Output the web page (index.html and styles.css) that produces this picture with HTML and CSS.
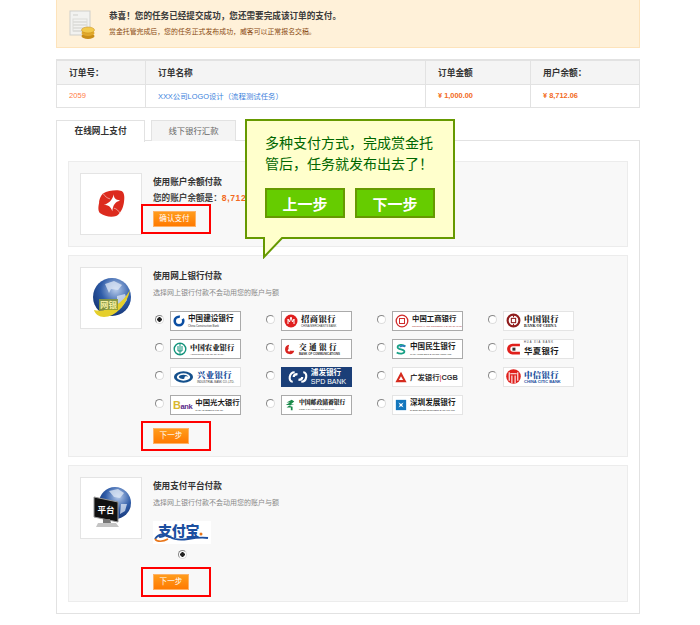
FILE: index.html
```html
<!DOCTYPE html>
<html lang="zh-CN">
<head>
<meta charset="utf-8">
<title>支付</title>
<link rel="stylesheet" href="styles.css">
</head>
<body>
<div class="page">
  <div class="notice">
    <svg class="notice-icon" viewBox="0 0 26 30" width="26" height="30">
      <rect x="1" y="1" width="20" height="24" fill="#f2f2f0" stroke="#cfcfcb"/>
      <path d="M4 5h5M4 12h14M4 15h14M4 18h14M4 21h10" stroke="#cfcfcb" fill="none"/>
      <rect x="4" y="9" width="14" height="12" fill="none" stroke="#dcdcd8"/>
      <ellipse cx="19" cy="26" rx="6.5" ry="3" fill="#c98d18"/>
      <ellipse cx="19" cy="23" rx="6.5" ry="3" fill="#e0a82c"/>
      <ellipse cx="19" cy="20" rx="6.5" ry="3" fill="#f2c94c" stroke="#c98d18" stroke-width=".5"/>
    </svg>
    <div>
      <p class="notice-title">恭喜&#xFF01;您的任务已经提交成功&#xFF0C;您还需要完成该订单的支付。</p>
      <p class="notice-sub">赏金托管完成后&#xFF0C;您的任务正式发布成功&#xFF0C;威客可以正常报名交稿。</p>
    </div>
  </div>

  <table class="order">
    <thead>
      <tr><th class="c1">订单号&#xFF1A;</th><th class="c2">订单名称</th><th class="c3">订单金额</th><th class="c4">用户余额&#xFF1A;</th></tr>
    </thead>
    <tbody>
      <tr>
        <td class="order-no">2059</td>
        <td><a class="order-link">XXX公司LOGO设计&#xFF08;流程测试任务&#xFF09;</a></td>
        <td class="money"><b>¥</b> 1,000.00</td>
        <td class="money"><b>¥</b> 8,712.06</td>
      </tr>
    </tbody>
  </table>

  <div class="tabs">
    <div class="tab active">在线网上支付</div>
    <div class="tab">线下银行汇款</div>
  </div>

  <div class="panel">
    <section class="method method-balance">
      <div class="thumb">
        <svg viewBox="0 0 40 40" width="31" height="31">
          <path d="M9 7C16 3 28 2 33 4c4 2 4 9 3 15-1 7-5 15-10 17-5 2-15 1-20-3-4-3-3-9-2-14 0-5 3-10 5-12z" fill="#dc2b1e"/>
          <path d="M23 8c0 5 2 7 8 8-6 2-9 5-10 14-2-6-5-8-11-8 6-2 11-6 13-14z" fill="#fff"/>
          <path d="M9 7c3 4 5 6 9 7M31 33c-2-4-4-6-8-7" stroke="#f9dcd8" stroke-width=".8" fill="none"/>
        </svg>
      </div>
      <div class="method-body">
        <h3 class="method-title">使用账户余额付款</h3>
        <p class="balance">您的账户余额是&#xFF1A;<b>8,712.06</b></p>
        <button class="pay-btn pay-btn-wide marked">确认支付</button>
      </div>
    </section>

    <section class="method method-bank">
      <div class="thumb">
        <svg viewBox="0 0 44 44" width="44" height="44">
          <defs>
            <radialGradient id="globe" cx=".6" cy=".3" r=".8">
              <stop offset="0" stop-color="#b9cdec"/><stop offset=".5" stop-color="#2f5ca8"/><stop offset="1" stop-color="#0d2a66"/>
            </radialGradient>
          </defs>
          <circle cx="23" cy="21" r="19" fill="url(#globe)"/>
          <path d="M16 8l9-3 8 4-4 5-7-1-2 4zM28 20l8-2 2 6-6 8-4-6z" fill="#dfe8f5" opacity=".75"/>
          <path d="M5 34c12 3 28-5 36-20-3 15-15 27-26 27-5 0-9-3-10-7z" fill="#e5cf2c"/>
          <rect x="10" y="23" width="19" height="11" fill="#8b9a3a" opacity=".9"/>
          <text x="19.500" y="32" class="thumb-label thumb-label-y">网银</text>
        </svg>
      </div>
      <div class="method-body">
        <h3 class="method-title">使用网上银行付款</h3>
        <p class="method-desc">选择网上银行付款不会动用您的账户与额</p>
        <div class="bank-grid">
          <label class="bank-opt"><input class="radio" type="radio" name="bank" checked><span class="bank">
            <svg class="mark" viewBox="0 0 14 14"><circle cx="7" cy="7" r="5" fill="none" stroke="#0b4ea2" stroke-width="3" stroke-dasharray="24 4"/></svg>
            <span class="bank-text"><span class="zh dark">中国建设银行</span><span class="en">China Construction Bank</span></span></span></label>
          <label class="bank-opt"><input class="radio" type="radio" name="bank"><span class="bank">
            <svg class="mark mark-m" viewBox="0 0 14 14"><circle cx="7" cy="7" r="6.500" fill="#e02020"/><path d="M4 10V5l1.500 3L7 3l1.500 5L10 5v5" stroke="#fff" fill="none"/></svg>
            <span class="bank-text"><span class="zh zh-l serif">招商银行</span><span class="en">CHINA MERCHANTS BANK</span></span></span></label>
          <label class="bank-opt"><input class="radio" type="radio" name="bank"><span class="bank">
            <svg class="mark mark-m" viewBox="0 0 14 14"><circle cx="7" cy="7" r="5.800" fill="none" stroke="#d02b2b" stroke-width="1.300"/><rect x="4.500" y="4.500" width="5" height="5" fill="none" stroke="#d02b2b"/></svg>
            <span class="bank-text"><span class="zh zh-t dark">中国工商银行</span><span class="en en-tight en-red">INDUSTRIAL AND COMMERCIAL BANK OF CHINA</span></span></span></label>
          <label class="bank-opt"><input class="radio" type="radio" name="bank"><span class="bank bank-light">
            <svg class="mark mark-l" viewBox="0 0 14 14"><circle cx="7" cy="7" r="5.500" fill="none" stroke="#8f1c1c" stroke-width="2"/><rect x="5" y="5" width="4" height="4" fill="none" stroke="#8f1c1c"/><path d="M7 1v3M7 10v3" stroke="#8f1c1c"/></svg>
            <span class="bank-text"><span class="zh zh-l serif">中国银行</span><span class="en en-black">BANK OF CHINA</span></span></span></label>

          <label class="bank-opt"><input class="radio" type="radio" name="bank"><span class="bank">
            <svg class="mark mark-m" viewBox="0 0 14 14"><circle cx="7" cy="7" r="5.800" fill="none" stroke="#12937b" stroke-width="1.400"/><path d="M7 2v10M5 4v5h4V4" stroke="#12937b" fill="none"/></svg>
            <span class="bank-text"><span class="zh zh-t serif">中国农业银行</span><span class="en en-tight">AGRICULTURAL BANK OF CHINA</span></span></span></label>
          <label class="bank-opt"><input class="radio" type="radio" name="bank"><span class="bank">
            <svg class="mark" viewBox="0 0 14 14"><path d="M6 2a5.500 5.500 0 1 0 6 7H8L5 6z" fill="#d8231f"/><circle cx="6" cy="8.500" r="1.500" fill="#fff"/></svg>
            <span class="bank-text"><span class="zh zh-wide serif">交通银行</span><span class="en en-wide">BANK OF COMMUNICATIONS</span></span></span></label>
          <label class="bank-opt"><input class="radio" type="radio" name="bank"><span class="bank">
            <svg class="mark" viewBox="0 0 14 14"><path d="M12 4C9 1 3 2 3 5s8 2 8 5-6 3-9 1" stroke="#17a085" stroke-width="2" fill="none"/><path d="M12 4C10 3 6 3 6 5" stroke="#2a7cc0" stroke-width="2" fill="none"/></svg>
            <span class="bank-text"><span class="zh dark">中国民生银行</span><span class="en en-tight">CHINA MINSHENG BANKING CORP.,LTD.</span></span></span></label>
          <label class="bank-opt"><input class="radio" type="radio" name="bank"><span class="bank bank-light">
            <svg class="mark mark-l" viewBox="0 0 14 14"><path d="M13 2.500H6A5 5 0 0 0 6 12.500h7V10H6.500a2.500 2.500 0 0 1 0-5H13z" fill="#e0201c"/><rect x="6" y="6.200" width="2.800" height="2.800" fill="#333"/></svg>
            <span class="bank-text bank-text-end"><span class="en en-top">HUA XIA BANK</span><span class="zh zh-l dark">华夏银行</span></span></span></label>

          <label class="bank-opt"><input class="radio" type="radio" name="bank"><span class="bank bank-light">
            <svg class="mark mark-w" viewBox="0 0 22 14"><ellipse cx="11" cy="7" rx="10" ry="6" fill="#14508c"/><ellipse cx="11" cy="7" rx="7" ry="3.800" fill="#fff"/><path d="M6 7c1-3 9-3 10 0-1-1-4-1-4 1s-5 1-6-1z" fill="#14508c"/></svg>
            <span class="bank-text"><span class="zh zh-l blue serif">兴业银行</span><span class="en">INDUSTRIAL BANK CO.,LTD.</span></span></span></label>
          <label class="bank-opt"><input class="radio" type="radio" name="bank"><span class="bank bank-spd">
            <svg class="mark mark-w" viewBox="0 0 22 14"><path d="M8 2C2 2 1 12 6 12M7 7c0-3 3-3 4-3M15 12c6 0 7-10 2-10M16 7c0 3-3 3-4 3" stroke="#fff" stroke-width="2.200" fill="none"/></svg>
            <span class="bank-text"><span class="zh white">浦发银行</span><span class="en-spd">SPD BANK</span></span></span></label>
          <label class="bank-opt"><input class="radio" type="radio" name="bank"><span class="bank bank-light">
            <svg class="mark" viewBox="0 0 14 14"><path d="M7 1l6.500 12H.5z" fill="#d52b1e"/><path d="M7 6l2.500 4.500h-5z" fill="#fff"/></svg>
            <span class="bank-text"><span class="zh-cgb">广发银行<i>|</i>CGB</span></span></span></label>
          <label class="bank-opt"><input class="radio" type="radio" name="bank"><span class="bank bank-light">
            <svg class="mark mark-l" viewBox="0 0 14 14"><circle cx="7" cy="7" r="6.800" fill="#e0201c"/><path d="M3 3v8M5.500 6v7M8.500 6v7M11 3v8M4 4.500h6" stroke="#fff"/></svg>
            <span class="bank-text"><span class="zh zh-l blue serif">中信银行</span><span class="en en-blue">CHINA CITIC BANK</span></span></span></label>

          <label class="bank-opt"><input class="radio" type="radio" name="bank"><span class="bank">
            <span class="ceb"><b>B</b>ank</span>
            <span class="bank-text"><span class="zh zh-t dark">中国光大银行</span><span class="en en-tight">CHINA EVERBRIGHT BANK</span></span></span></label>
          <label class="bank-opt"><input class="radio" type="radio" name="bank"><span class="bank">
            <svg class="mark" viewBox="0 0 14 14"><path d="M9 1L3 4h4L2 7h5L3 10h5v3h2V9L6 8l6-2H8l4-3z" fill="#1a8a4a"/></svg>
            <span class="bank-text"><span class="zh zh-s serif dark">中国邮政储蓄银行</span><span class="en en-tight">POSTAL SAVINGS BANK OF CHINA</span></span></span></label>
          <label class="bank-opt"><input class="radio" type="radio" name="bank"><span class="bank bank-light">
            <svg class="mark" viewBox="0 0 14 14"><rect x="1" y="1" width="12" height="12" fill="#1477bd"/><path d="M4 4l2.500 1.500h1L10 4 8.500 6.500v1L10 10 7.500 8.500h-1L4 10l1.500-2.500v-1z" fill="#fff"/></svg>
            <span class="bank-text"><span class="zh dark">深圳发展银行</span><span class="en en-tight">SHENZHEN DEVELOPMENT BANK CO.,LTD.</span></span></span></label>
        </div>
        <button class="pay-btn marked marked-next">下一步</button>
      </div>
    </section>

    <section class="method method-platform">
      <div class="thumb">
        <svg viewBox="0 0 44 44" width="44" height="44">
          <circle cx="26" cy="17" r="16" fill="url(#globe)"/>
          <path d="M20 5l9-2 6 4-4 5-6-1zM32 18l6 0-2 7-5 3z" fill="#dfe8f5" opacity=".75"/>
          <path d="M5 11l24 5v20L5 31z" fill="#111" stroke="#9a9a9a"/>
          <text x="17" y="27" class="thumb-label thumb-label-w">平台</text>
          <path d="M14 33h7l1 4h-8z" fill="#777"/>
          <path d="M9 37h18l3 4H7z" fill="#c4c4c4"/>
        </svg>
      </div>
      <div class="method-body">
        <h3 class="method-title">使用支付平台付款</h3>
        <p class="method-desc">选择网上银行付款不会动用您的账户与额</p>
        <label class="alipay">
          <span class="alipay-logo">
            <span class="alipay-name">支付宝</span>
            <svg class="alipay-swoosh" viewBox="0 0 58 22" width="58" height="22"><path d="M2 17c4-6 10-5 15-2s12 3 18 2 14-2 20-1" stroke="#1c4fa0" stroke-width="1.800" fill="none"/><path d="M2 17c2 3 8 3 13 0" stroke="#e8761a" stroke-width="1.600" fill="none"/><circle cx="48" cy="12" r="1.500" fill="#e8761a"/></svg>
          </span>
          <input class="radio" type="radio" name="platform" checked>
        </label>
        <button class="pay-btn marked marked-next">下一步</button>
      </div>
    </section>
  </div>

  <div class="guide">
    <p class="guide-text">多种支付方式&#xFF0C;完成赏金托管后&#xFF0C;任务就发布出去了&#xFF01;</p>
    <div class="guide-actions">
      <button class="guide-btn">上一步</button>
      <button class="guide-btn">下一步</button>
    </div>
    <svg class="guide-tail" viewBox="0 0 22 22" width="22" height="22"><path d="M1 0v20L20 0" fill="#ffc" stroke="#690" stroke-width="2"/></svg>
  </div>
</div>
</body>
</html>
```
FILE: styles.css
```css
*, *::after { box-sizing: border-box; }
html, body { margin: 0; padding: 0; background: #fff; }
body { font-family: "Liberation Sans", "Noto Sans CJK SC", sans-serif; color: #333; }
p, h3 { margin: 0; }

.page { position: relative; width: 584px; margin-left: 56px; padding-bottom: 11px; }

.notice {
  display: flex; align-items: flex-start; height: 48px; padding: 10px 0 0 12px;
  background: #fff1d9; border: 1px solid #fde3bb; border-top: 0;
}
.notice-icon { flex: none; margin-right: 14px; }
.notice-title { font-size: 8.6px; line-height: 12px; font-weight: 700; color: #3a3a3a; }
.notice-sub { margin-top: 5px; font-size: 6.9px; line-height: 10px; color: #8a4b12; }

.order { width: 100%; margin-top: 11px; border-collapse: collapse; table-layout: fixed; font-size: 8.7px; }
.order th, .order td { border: 1px solid #e2e2e2; padding: 0 0 0 12px; text-align: left; }
.order th { height: 24px; background: #f4f4f4; font-weight: 700; color: #333; border-width: 2px 1px 1px; }
.order td { height: 23px; font-size: 7.4px; }
.c1 { width: 89px; } .c3 { width: 105px; } .c4 { width: 109px; }
.order-no { color: #ff7a45; font-family: "Liberation Sans", sans-serif; font-size: 7.6px !important; }
.order-link { color: #3a7fdc; }
.money { color: #f26a21; font-weight: 700; }

.tabs { display: flex; gap: 6px; height: 22px; margin-top: 12px; position: relative; z-index: 1; }
.tab {
  width: 85px; height: 21px; text-align: center; line-height: 20px; font-size: 8.4px; color: #666;
  background: #f4f4f4; border: 1px solid #e2e2e2; border-bottom: 0;
}
.tab.active { width: 89px; height: 22px; background: #fff; font-weight: 700; color: #333; font-size: 8.7px; }

.panel { padding: 20px 11px 11px; border: 1px solid #e2e2e2; margin-top: -2px; }
.method { display: flex; padding: 11px 11px 0; background: #f8f8f8; border: 1px solid #ececec; }
.method + .method { margin-top: 8px; }
.method-balance { height: 86px; }
.method-bank { height: 202px; }
.method-platform { height: 137px; }
.thumb {
  flex: none; display: flex; align-items: center; justify-content: center;
  width: 62px; height: 62px; background: #fff; border: 1px solid #e4e4e4;
}
.thumb-label { font-size: 8.5px; font-weight: 700; fill: #fff; text-anchor: middle; font-family: "Noto Sans CJK SC", sans-serif; }
.thumb-label-y { fill: #f4eda0; }
.method-body { margin-left: 11px; flex: 1; }
.method-title { margin-top: 1px; font-size: 8.6px; line-height: 16px; font-weight: 700; color: #333; }
.method-desc { margin-top: 1px; font-size: 7px; line-height: 16px; color: #888; }
.balance { font-size: 8.6px; line-height: 16px; font-weight: 700; color: #444; }
.balance b { color: #f26a21; font-family: "Liberation Sans", sans-serif; letter-spacing: .6px; }

.pay-btn {
  position: relative; display: block; width: 36px; height: 16px; margin: 5px 0 0; padding: 0;
  border: 1px solid #ffb266; font-size: 7.6px; line-height: 13px; color: #fff; font-family: inherit;
  background: linear-gradient(#ff9c1c, #ff7a00);
}
.pay-btn-wide { width: 43px; }
.marked::after {
  content: ""; position: absolute; left: -13px; top: -8px; width: 70px; height: 30px;
  border: 2px solid #f00;
}
.marked-next { margin-top: 5px; }

.bank-grid { display: grid; grid-template-columns: repeat(4, 111px); grid-auto-rows: 28px; margin-top: 10px; margin-left: 2px; }
.bank-opt { display: flex; align-items: flex-start; }
.radio {
  appearance: none; flex: none; width: 9px; height: 9px; margin: 4px 6px 0 0; border-radius: 50%;
  border: 1px solid #888; border-right-color: #ddd; border-bottom-color: #ddd; background: #fff;
}
.radio:checked { background: radial-gradient(circle, #222 0 2px, #fff 2.500px); }

.bank {
  display: flex; align-items: center; gap: 3px; width: 71px; height: 20px; padding: 0 2px;
  background: #fff; border: 1px solid #aaa; overflow: hidden;
}
.bank-light { border-color: #e4e4e4; }
.bank-spd { background: #1b3f78; border-color: #1b3f78; justify-content: center; }
.mark { flex: none; width: 12px; height: 12px; }
.mark-m { width: 14px; height: 14px; }
.mark-l { width: 15px; height: 15px; }
.mark-w { width: 21px; height: 14px; }
.bank-text { display: flex; flex-direction: column; gap: 1px; min-width: 0; white-space: nowrap; align-items: flex-start; }
.zh { font-size: 7.6px; line-height: 9px; font-weight: 700; color: #222; }
.zh-l { font-size: 8.4px; line-height: 10px; letter-spacing: .4px; }
.zh-t { font-size: 7.4px; }
.zh-s { font-size: 5.800px; line-height: 8px; }
.zh-wide { letter-spacing: 2.400px; }
.serif { font-family: "Noto Serif CJK SC", "Noto Sans CJK SC", serif; font-weight: 900; }
.dark { color: #1a1a1a; }
.blue { color: #1b4f9c; }
.white { color: #fff; }
.en { font-size: 2.800px; line-height: 4px; color: #333; }
.en-tight { font-size: 2.200px; }
.en-top { letter-spacing: 1px; font-size: 2.600px; }
.en-red { color: #a33; }
.en-black { color: #111; font-size: 4px; font-family: "Liberation Serif", serif; font-weight: 700; }
.en-blue { color: #1b4f9c; font-size: 4px; font-weight: 700; }
.en-wide { font-size: 2.900px; font-weight: 700; }
.en-spd { color: #fff; font-size: 7px; line-height: 8px; }
.zh-cgb { font-size: 7.400px; font-weight: 700; color: #333; }
.zh-cgb i { color: #d52b1e; font-style: normal; font-weight: 400; }
.ceb { flex: none; font-size: 7.500px; font-weight: 700; color: #5b2a8c; letter-spacing: -.4px; }
.ceb b { font-size: 11px; color: #d9b730; }

.alipay { display: flex; flex-direction: column; align-items: center; width: 58px; margin-top: 10px; }
.alipay-logo { position: relative; display: block; width: 58px; height: 23px; background: #fff; }
.alipay-name { position: absolute; left: 5px; top: 0; font-size: 14px; line-height: 20px; font-weight: 900; letter-spacing: -.3px; color: #1c4fa0; }
.alipay-swoosh { position: absolute; left: 0; top: 1px; }
.alipay .radio { margin: 6px 0 0; }
.method-platform .marked-next { margin-top: 15px; }

.guide {
  position: absolute; left: 189px; top: 119px; width: 210px; height: 120px; padding: 11px 18px 0;
  background: #ffc; border: 2px solid #690;
}
.guide-text { font-size: 14px; line-height: 21px; color: #060; font-family: "Noto Sans CJK SC", sans-serif; }
.guide-actions { display: flex; gap: 10px; margin-top: 14px; }
.guide-btn {
  width: 80px; height: 30px; padding: 0; background: #6c0; border: 2px solid #690; color: #fff;
  font-size: 15px; font-weight: 700; font-family: "Noto Sans CJK SC", sans-serif;
}
.guide-tail { position: absolute; left: 16px; top: 116px; }
```
